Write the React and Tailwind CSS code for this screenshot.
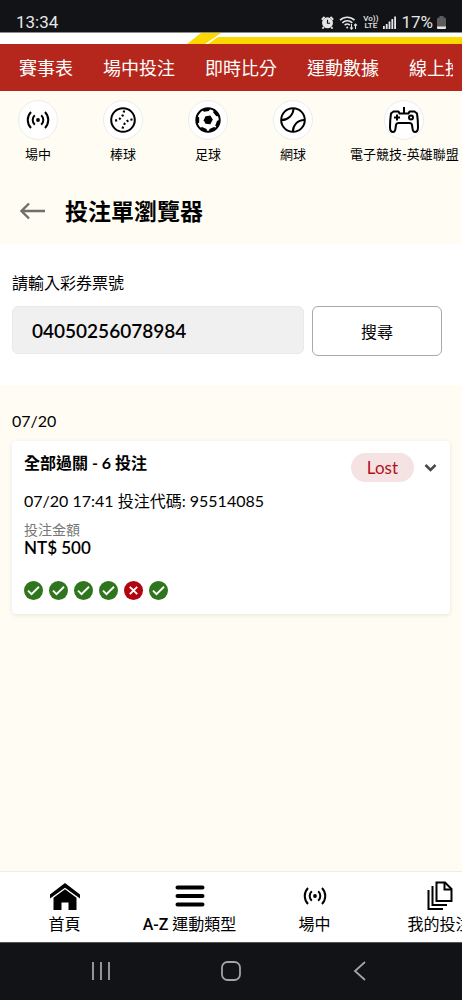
const TABS = ['賽事表', '場中投注', '即時比分', '運動數據', '線上投注']

const SPORTS = [
  { label: '場中', Icon: LiveIcon },
  { label: '棒球', Icon: BaseballIcon },
  { label: '足球', Icon: SoccerIcon },
  { label: '網球', Icon: TennisIcon },
  { label: '電子競技-英雄聯盟', Icon: GamepadIcon },
]

const BOTTOM = [
  { label: '首頁', Icon: HomeIcon },
  { label: 'A-Z 運動類型', Icon: MenuIcon },
  { label: '場中', Icon: LiveIcon },
  { label: '我的投注', Icon: PagesIcon },
]

const LEGS = [true, true, true, true, false, true]

export default function App() {
  return (
    <div className="flex min-h-screen flex-col overflow-hidden bg-[#fffdf3] font-[Lato,'Noto_Sans_CJK_TC',sans-serif] text-black">
      <StatusBar />
      <LogoStrip />
      <nav className="flex h-[47px] items-center bg-[#b5271c] pt-px pr-[9px] pl-[19px] text-lg text-white">
        <div className="flex flex-1 gap-[30px] overflow-hidden whitespace-nowrap">
          {TABS.map((t) => (
            <a key={t} href="#" className="shrink-0">{t}</a>
          ))}
        </div>
      </nav>
      <nav className="flex gap-[21px] overflow-hidden pt-[9px] pl-[6px]">
        {SPORTS.map(({ label, Icon }) => (
          <a key={label} href="#" className="flex min-w-16 shrink-0 flex-col items-center px-1 text-[13px] leading-5">
            <span className="mb-1 flex size-10 items-center justify-center rounded-full border border-[#ececec] bg-white">
              <Icon />
            </span>
            {label}
          </a>
        ))}
      </nav>

      <main className="flex-1">
        <header className="flex h-20 items-center gap-5 pt-[14px] pl-5">
          <button type="button" aria-label="返回">
            <svg width="25" height="18" viewBox="0 0 25 18" fill="none" stroke="#6f6e69" strokeWidth="2.4">
              <path d="M25 9H1.500M9 1.500L1.500 9L9 16.500" />
            </svg>
          </button>
          <h1 className="text-[23px] font-bold">投注單瀏覽器</h1>
        </header>
        <TicketSearch />
        <section className="px-3 pt-6">
          <h2 className="mb-2 text-base leading-6">07/20</h2>
          <BetCard />
        </section>
      </main>

      <nav className="flex h-[71px] overflow-hidden border-t border-[#efede2] bg-white pt-[6px] pl-[2px] font-[Roboto,'Noto_Sans_CJK_TC',sans-serif]">
        {BOTTOM.map(({ label, Icon }) => (
          <a key={label} href="#" className="flex w-[125px] shrink-0 flex-col items-center text-base whitespace-nowrap">
            <span className="flex h-9 items-center"><Icon /></span>
            <span className="leading-[22px]">
              {label.startsWith('A-Z') ? <><span className="font-medium">A-Z</span>{label.slice(3)}</> : label}
            </span>
          </a>
        ))}
      </nav>
      <SystemBar />
    </div>
  )
}

function StatusBar() {
  return (
    <div className="flex h-8 items-center justify-between bg-[#111317] pt-3 pr-4 pl-4 font-[Roboto,sans-serif] text-[17px] leading-5 text-[#e6e6e6]">
      <span>13:34</span>
      <div className="flex items-center gap-[5px]">
        {/* alarm */}
        <svg width="13" height="13" viewBox="0 0 14 14">
          <path d="M0.800 4l3-3M13.200 4l-3-3M3 12l-1.500 1.500M11 12l1.500 1.500" stroke="#e6e6e6" strokeWidth="2" />
          <circle cx="7" cy="7.300" r="5.900" fill="#e6e6e6" />
          <path d="M7 4v3.800h2.800" stroke="#111317" strokeWidth="1.300" fill="none" />
        </svg>
        {/* wifi */}
        <svg width="19" height="15" viewBox="0 0 19 15" fill="none" stroke="#e6e6e6" strokeWidth="1.600">
          <path d="M1 5.200a10.500 10.500 0 0 1 14.500 0M3.300 7.800a7.300 7.300 0 0 1 10 0M5.600 10.200a4 4 0 0 1 5.300 0" />
          <circle cx="8.200" cy="12.500" r="1" fill="#e6e6e6" stroke="none" />
          <path d="M12.500 9v5M11 12.500l1.500 1.700 1.500-1.700M16.500 14V9M15 10.700L16.500 9l1.500 1.700" strokeWidth="1.100" />
        </svg>
        <span className="flex flex-col text-center text-[8px] leading-[7px] font-medium">
          <span>Vo))</span>
          <span>LTE</span>
        </span>
        {/* signal */}
        <svg width="13" height="13" viewBox="0 0 13 13" fill="#e6e6e6">
          <path d="M0 10h1.800v3H0zM2.800 8h1.800v5H2.800zM5.600 5.500h1.800V13H5.600zM8.400 3h1.800v10H8.400zM11.200 0.500H13V13h-1.800z" />
        </svg>
        <span className="flex items-center gap-1">
          17%
          <svg width="9" height="13" viewBox="0 0 9 13">
            <path d="M2.500 0h4v1.500h1A1.500 1.500 0 0 1 9 3v10H0V3a1.500 1.500 0 0 1 1.500-1.500h1z" fill="#5c5c5e" />
            <path d="M0 10.500h9v1a1.500 1.500 0 0 1-1.500 1.500h-6A1.500 1.500 0 0 1 0 11.500z" fill="#e6e6e6" />
          </svg>
        </span>
      </div>
    </div>
  )
}

// Bottom edge of the brand logo that stays visible above the tabs.
function LogoStrip() {
  return (
    <div className="flex h-3 items-end justify-end overflow-hidden border-t border-[#8b8b8b] bg-white">
      <svg width="276" height="11" viewBox="0 0 276 11" fill="#fbd800">
        <path d="M1 11L15 0h20L19 11z" />
        <path d="M22 11l10-7h244v7z" />
      </svg>
    </div>
  )
}

function TicketSearch() {
  return (
    <form className="bg-white px-3 pt-[27px] pb-[29px]" onSubmit={(e) => e.preventDefault()}>
      <label htmlFor="ticket" className="block text-base leading-6">請輸入彩券票號</label>
      <div className="mt-[11px] flex items-start gap-2 pr-2">
        <input
          id="ticket"
          defaultValue="04050256078984"
          className="h-12 min-w-0 flex-1 rounded-md border border-[#e9e9e9] bg-[#f0f0f0] px-[19px] text-[19px] font-semibold"
        />
        <button type="submit" className="h-[50px] w-[130px] rounded-md border border-[#a9a9a9] bg-white pt-px text-base">
          搜尋
        </button>
      </div>
    </form>
  )
}

function BetCard() {
  return (
    <article className="rounded-sm bg-white px-3 pt-3 pb-[14px] shadow-[0_1px_4px_rgba(0,0,0,0.1)]">
      <div className="flex items-start justify-between">
        <h3 className="text-base leading-[20px] font-bold">全部過關 - 6 投注</h3>
        <div className="flex items-center gap-[10px]">
          <span className="rounded-full bg-[#f5e3e4] px-4 text-[17px] leading-[29px] text-[#b4101a]">Lost</span>
          <button type="button" aria-label="展開" className="pr-px">
            <svg width="13" height="10" viewBox="0 0 13 10" fill="none" stroke="#4a4a4a" strokeWidth="2.600">
              <path d="M1.500 2l5 5 5-5" />
            </svg>
          </button>
        </div>
      </div>
      <p className="mt-[7px] text-base leading-6">07/20 17:41 投注代碼: 95514085</p>
      <p className="mt-2 text-sm leading-[18px] text-[#777]">投注金額</p>
      <p className="text-[17px] leading-[18px] font-semibold">NT$ 500</p>
      <ul className="mt-6 flex gap-[6px]">
        {LEGS.map((won, i) => (
          <li key={i}>
            <svg width="19" height="19" viewBox="0 0 19 19" fill="none" stroke="#fff" strokeWidth="1.900">
              <circle cx="9.500" cy="9.500" r="9.500" fill={won ? '#2f751d' : '#b00510'} stroke="none" />
              <path d={won ? 'M4 9.600l3.500 3.500 7.500-7.300' : 'M5.800 5.800l7.400 7.400M13.200 5.800l-7.400 7.400'} />
            </svg>
          </li>
        ))}
      </ul>
    </article>
  )
}

function SystemBar() {
  return (
    <div className="flex h-[58px] items-center justify-around border-t border-[#555] bg-[#111317] px-9 pb-px text-[#a3a4a7]">
      <button type="button" aria-label="最近">
        <svg width="20" height="20" viewBox="0 0 20 20" stroke="currentColor" strokeWidth="1.800">
          <path d="M2 1v18M10 1v18M18 1v18" />
        </svg>
      </button>
      <button type="button" aria-label="主畫面">
        <svg width="20" height="20" viewBox="0 0 20 20" fill="none" stroke="currentColor" strokeWidth="1.800">
          <rect x="1" y="1" width="18" height="18" rx="5.500" />
        </svg>
      </button>
      <button type="button" aria-label="上一頁">
        <svg width="20" height="20" viewBox="0 0 20 20" fill="none" stroke="currentColor" strokeWidth="1.800">
          <path d="M14 1L4 10l10 9" />
        </svg>
      </button>
    </div>
  )
}

function LiveIcon() {
  return (
    <svg width="24" height="20" viewBox="0 0 24 20" fill="none" stroke="#000" strokeWidth="2">
      <circle cx="12" cy="10" r="1.900" fill="#000" stroke="none" />
      <path d="M8.800 5.200a6.500 6.500 0 0 0 0 9.600M15.200 5.200a6.500 6.500 0 0 1 0 9.600" />
      <path d="M5 2a11.500 11.500 0 0 0 0 16M19 2a11.500 11.500 0 0 1 0 16" />
    </svg>
  )
}

function BaseballIcon() {
  return (
    <svg width="26" height="26" viewBox="0 0 26 26" fill="none" stroke="#000" strokeWidth="2">
      <circle cx="13" cy="13" r="11.800" />
      <path d="M14 3.500c-.3 6-4.500 10-10.500 10.300M22.500 12.500c-6 .3-9.500 4.500-10 10.500" strokeWidth="2.200" strokeDasharray="2 2.200" />
    </svg>
  )
}

function SoccerIcon() {
  return (
    <svg width="26" height="26" viewBox="0 0 26 26">
      <circle cx="13" cy="13" r="11.700" fill="none" stroke="#000" strokeWidth="2" />
      <path d="M10.500 9.200l4.800-.7 2.500 4-2.500 4.700-4.800-.4-1.800-3.600z" />
      {[-10, 50, 110, 155, 205, 270].map((deg) => (
        <path key={deg} transform={`rotate(${deg} 13 13)`} d="M8.500 1.500h9l-2 2.700-5 0z" />
      ))}
    </svg>
  )
}

function TennisIcon() {
  return (
    <svg width="26" height="26" viewBox="0 0 26 26" fill="none" stroke="#000" strokeWidth="2">
      <circle cx="13" cy="13" r="11.800" />
      <path d="M13.500 1.300C13.500 8 8 13 1.500 13M24.500 13C17.500 13 13 18 12.800 24.700" />
    </svg>
  )
}

function GamepadIcon() {
  return (
    <svg width="30" height="26" viewBox="0 0 30 26" className="shrink-0" fill="none" stroke="#000" strokeWidth="2" strokeLinejoin="round">
      <path d="M15 0v6.500" />
      <path d="M10.500 6.500L9.500 4.500H4.500L2 6.500C1.300 11 1 16 1 20c0 3.300 1.500 5 3 5s2.300-1.500 2.500-3.500L7 18c.3-1.200 1-2 2.500-2h11c1.500 0 2.200.8 2.500 2l.5 3.500c.2 2 1 3.500 2.500 3.500s3-1.700 3-5c0-4-.3-9-1-13.500l-2.500-2h-5l-1 2z" />
      <path d="M8 7.500v6M5 10.500h6" />
      <circle cx="22" cy="10.500" r="2" />
    </svg>
  )
}

function HomeIcon() {
  return (
    <svg width="30" height="27" viewBox="0 0 30 27">
      <path d="M15 0l15 11.500v4L15 4.800 0 15.500v-4z" />
      <path d="M15 6.200l11.500 8.500V27H18.500v-7.500h-7V27H3.500V14.700z" />
    </svg>
  )
}

function MenuIcon() {
  return (
    <svg width="30" height="22" viewBox="0 0 30 22" stroke="#000" strokeWidth="4" strokeLinecap="round">
      <path d="M2.500 2.500h25M2.500 11h25M2.500 19.500h25" />
    </svg>
  )
}

function PagesIcon() {
  return (
    <svg width="26" height="30" viewBox="0 0 26 30" fill="none" stroke="#000" strokeWidth="2">
      <path d="M9.500 1.500H18l6.500 6.500v12h-15z" />
      <path d="M17.500 2v6.500H24" />
      <path d="M5.500 5v19H20M1.500 9v19H16" />
    </svg>
  )
}
